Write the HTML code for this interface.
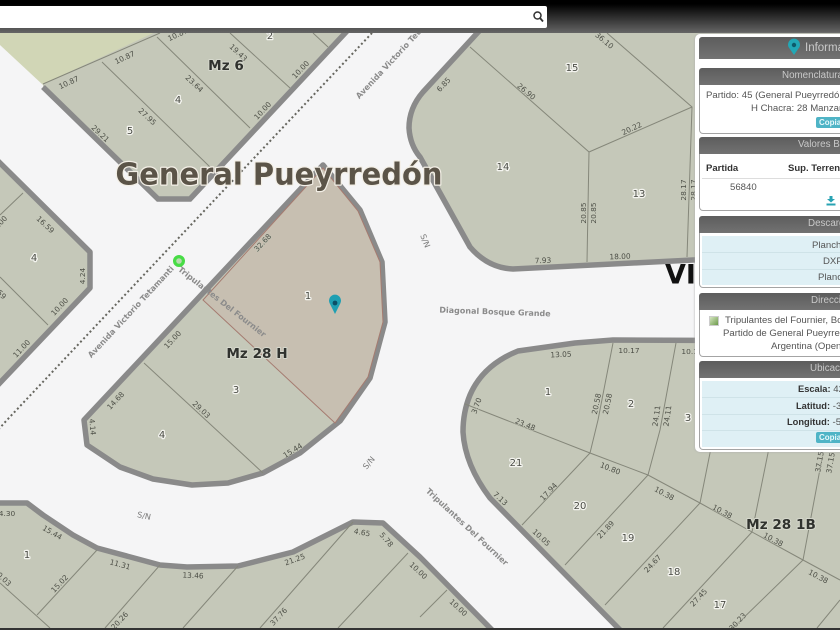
<!DOCTYPE html>
<html><head><meta charset="utf-8">
<style>
html,body{margin:0;padding:0;background:#f5f5f6}
#w{position:relative;width:840px;height:630px;overflow:hidden;font-family:"Liberation Sans",sans-serif}
svg{position:absolute;left:0;top:0;filter:blur(.35px)}
.b{fill:#c5c8b9;stroke:#8a8a8a;stroke-width:5.5;stroke-linejoin:round}
.l{fill:none;stroke:#85877a;stroke-width:1}
text{font-family:"DejaVu Sans","Liberation Sans",sans-serif;text-anchor:middle;dominant-baseline:middle}
.d{font-size:7.4px;fill:#4d4f47;paint-order:stroke;stroke:#c5c8b9;stroke-width:1px}
.n{font-size:10px;fill:#4a4c45;paint-order:stroke;stroke:#f4f4ef;stroke-width:2.5px;stroke-linejoin:round}
.m{font-size:13.6px;font-weight:bold;fill:#30322e;paint-order:stroke;stroke:#d6d8cd;stroke-width:2px;stroke-linejoin:round}
.r{font-size:8px;fill:#8b8b8b;font-weight:bold;paint-order:stroke;stroke:#f5f5f6;stroke-width:1px}
.s{font-size:8px;fill:#7a7a7a}
#top{position:absolute;left:0;top:0;width:840px;height:33px;background:linear-gradient(#000 0,#000 4px,#666 33px)}
#search{position:absolute;left:0;top:6px;width:547px;height:22px;background:#fff;border-radius:0 2px 2px 0}
#panel{position:absolute;left:695px;top:34px;width:160px;height:418px;background:#fff;border-radius:5px;box-shadow:0 0 2px #aaa}
.h{position:absolute;left:704px;width:141px;background:linear-gradient(#5d5d5d,#727272);border-radius:3px 0 0 0;color:#c9c9c9;font-size:9.8px;line-height:16px;height:16px}
.h span{position:absolute;white-space:nowrap;top:0}
.c{position:absolute;left:699px;width:150px;background:#fff;border:1px solid #a4a4a4;border-top:0;border-radius:0 0 4px 4px;box-sizing:border-box}
.t{position:absolute;font-size:9.6px;color:#555;white-space:nowrap;line-height:13px}
.tb{position:absolute;left:702px;width:145px;background:#dff0f5}
.sep{position:absolute;left:702px;width:145px;height:1px;background:#cfe3e8}
.cp{position:absolute;left:816px;width:30px;height:11px;background:#4fb4c6;border-radius:2px;color:#e8f8fb;font-size:8px;font-weight:bold;line-height:11px;padding-left:3px;box-sizing:border-box}
</style></head><body>
<div id="w">
<svg width="840" height="630" viewBox="0 0 840 630">
<rect width="840" height="630" fill="#f5f5f6"/>
<polygon points="0,33 162,33 43,85 0,45" fill="#d1d6b6"/>
<!-- Mz 6 -->
<path class="b" d="M43,87 L158,199 L190,199 L348,30 L160,30 L43,84Z" style="stroke:none"/>
<path fill="none" stroke="#8a8a8a" stroke-width="5.5" d="M43,87 L158,199 L190,199 L348,30"/>
<path class="l" d="M43,84 L160,33M102,62 L210,167M157,37 L250,128M230,33 L290,88M313,33 L328,47"/>
<!-- left block -->
<path class="b" d="M-5,158 L90,252 L90,288 L-5,388Z"/>
<path class="l" d="M0,277 L48,325M23,193 L0,215"/>
<!-- Mz 28H -->
<path class="b" d="M323,165 L360,210 L382,262 L385,322 L370,378 L340,421 L300,453 L263,473 L228,483 L192,485 L153,479 L120,467 L87,445 L84,420Z"/>
<path d="M323,168 L358,211 L380,262 L383,322 L368,377 L335,423 L203,300Z" fill="#c7bfb1" stroke="#a57b70" stroke-width="1"/>
<path class="l" d="M144,363 L263,473"/>
<!-- right top -->
<path class="b" d="M481,29 L423,92 Q409,108 409,128 Q410,145 420,157 L470,247 Q488,268 513,269 L693,260 L860,255 L860,29Z"/>
<path class="l" d="M470,47 L589,152 L587,262M589,152 L692,107M607,33 L692,107 L687,257"/>
<!-- lower right -->
<path class="b" d="M860,341 L613,340 L575,343 L518,351 Q483,365 470,395 Q463,412 463,432 Q465,465 490,498 L625,635 L860,635Z"/>
<path class="l" d="M465,404 L590,453 L648,475 L700,503 L752,532 L803,560 L840,580M590,453 L598,420 L613,343M648,475 L660,430 L676,343M700,503 L710,453 L725,345M752,532 L768,453 L780,345M803,560 L823,453L835,345M590,453 L522,525M648,475 L565,565M700,503 L605,605M752,532 L663,628M803,560 L733,628M840,600 L817,628"/>
<!-- bottom left -->
<path class="b" d="M-5,503 L27,503 L43,515 L73,535 L97,548 L160,565 L187,567 L238,566 L293,552 L353,522 L383,523 L420,557 L497,635 L-5,635Z"/>
<path class="l" d="M97,550 L37,615M0,583 L50,628M160,565 L105,628M238,566 L183,628M353,522 L260,628M408,553 L338,628M447,590 L420,617"/>
<!-- dotted railway -->
<path d="M372,33 L205,210 L7,420 L-2,430" fill="none" stroke="#66665f" stroke-width="2" stroke-dasharray="2 2.6"/>
<!-- road labels -->
<g>
<text class="r" transform="translate(131 312) rotate(-47)">Avenida Victorio Tetamanti</text>
<text class="r" transform="translate(399 53) rotate(-47)">Avenida Victorio Tetamanti</text>
<text class="r" transform="translate(222 302) rotate(38)" style="stroke:none">Tripulantes Del Fournier</text>
<text class="r" transform="translate(467 527) rotate(43)">Tripulantes Del Fournier</text>
<text class="r" transform="translate(495 312) rotate(2)">Diagonal Bosque Grande</text>
</g>
<text class="s" transform="translate(425 241) rotate(68)">S/N</text>
<text class="s" transform="translate(369 463) rotate(-50)">S/N</text>
<text class="s" transform="translate(144 516) rotate(12)">S/N</text>
<!-- dims -->
<text class="d" transform="translate(69 83) rotate(-25)">10.87</text>
<text class="d" transform="translate(125 58) rotate(-25)">10.87</text>
<text class="d" transform="translate(178 35) rotate(-25)">10.87</text>
<text class="d" transform="translate(238 53) rotate(43)">19.43</text>
<text class="d" transform="translate(194 84) rotate(43)">23.64</text>
<text class="d" transform="translate(147 117) rotate(43)">27.95</text>
<text class="d" transform="translate(100 134) rotate(43)">29.21</text>
<text class="d" transform="translate(301 70) rotate(-47)">10.00</text>
<text class="d" transform="translate(263 111) rotate(-47)">10.00</text>
<text class="d" transform="translate(444 85) rotate(-47)">6.85</text>
<text class="d" transform="translate(526 92) rotate(40)">26.90</text>
<text class="d" transform="translate(604 41) rotate(40)">36.10</text>
<text class="d" transform="translate(632 129) rotate(-25)">20.22</text>
<text class="d" transform="translate(684 190) rotate(-90)">28.17</text>
<text class="d" transform="translate(694 190) rotate(-90)">28.17</text>
<text class="d" transform="translate(584 213) rotate(-90)">20.85</text>
<text class="d" transform="translate(594 213) rotate(-90)">20.85</text>
<text class="d" transform="translate(543 261) rotate(-2)">7.93</text>
<text class="d" transform="translate(620 257) rotate(-2)">18.00</text>
<text class="d" transform="translate(45 225) rotate(43)">16.59</text>
<text class="d" transform="translate(83 276) rotate(-90)">4.24</text>
<text class="d" transform="translate(60 307) rotate(-47)">10.00</text>
<text class="d" transform="translate(22 349) rotate(-47)">11.00</text>
<text class="d" transform="translate(-3 291) rotate(43)">16.59</text>
<text class="d" transform="translate(-1 225) rotate(-47)">10.00</text>
<text class="d" transform="translate(263 243) rotate(-47)">32.68</text>
<text class="d" transform="translate(173 340) rotate(-47)">15.00</text>
<text class="d" transform="translate(116 401) rotate(-47)">14.68</text>
<text class="d" transform="translate(201 410) rotate(43)">29.03</text>
<text class="d" transform="translate(293 451) rotate(-32)">15.44</text>
<text class="d" transform="translate(92 427) rotate(85)">4.14</text>
<text class="d" transform="translate(561 355) rotate(-3)">13.05</text>
<text class="d" transform="translate(629 351)">10.17</text>
<text class="d" transform="translate(692 352)">10.17</text>
<text class="d" transform="translate(477 406) rotate(-70)">3.70</text>
<text class="d" transform="translate(597 404) rotate(-78)">20.58</text>
<text class="d" transform="translate(608 404) rotate(-78)">20.58</text>
<text class="d" transform="translate(657 416) rotate(-82)">24.11</text>
<text class="d" transform="translate(668 416) rotate(-82)">24.11</text>
<text class="d" transform="translate(525 425) rotate(22)">23.48</text>
<text class="d" transform="translate(610 469) rotate(22)">10.80</text>
<text class="d" transform="translate(664 494) rotate(28)">10.38</text>
<text class="d" transform="translate(722 512) rotate(28)">10.38</text>
<text class="d" transform="translate(773 540) rotate(28)">10.38</text>
<text class="d" transform="translate(818 577) rotate(28)">10.38</text>
<text class="d" transform="translate(820 462) rotate(-80)">37.15</text>
<text class="d" transform="translate(831 463) rotate(-80)">37.15</text>
<text class="d" transform="translate(500 499) rotate(43)">7.13</text>
<text class="d" transform="translate(549 492) rotate(-47)">17.94</text>
<text class="d" transform="translate(541 538) rotate(43)">10.05</text>
<text class="d" transform="translate(606 530) rotate(-47)">21.89</text>
<text class="d" transform="translate(653 564) rotate(-47)">24.67</text>
<text class="d" transform="translate(699 598) rotate(-47)">27.45</text>
<text class="d" transform="translate(738 622) rotate(-47)">30.23</text>
<text class="d" transform="translate(418 571) rotate(43)">10.00</text>
<text class="d" transform="translate(458 608) rotate(43)">10.00</text>
<text class="d" transform="translate(362 533) rotate(10)">4.65</text>
<text class="d" transform="translate(386 540) rotate(50)">5.78</text>
<text class="d" transform="translate(295 560) rotate(-20)">21.25</text>
<text class="d" transform="translate(279 617) rotate(-47)">37.76</text>
<text class="d" transform="translate(193 576) rotate(3)">13.46</text>
<text class="d" transform="translate(120 565) rotate(15)">11.31</text>
<text class="d" transform="translate(52 533) rotate(30)">15.44</text>
<text class="d" transform="translate(7 514)">4.30</text>
<text class="d" transform="translate(60 584) rotate(-47)">15.02</text>
<text class="d" transform="translate(120 621) rotate(-47)">20.26</text>
<text class="d" transform="translate(2 578) rotate(43)">20.03</text>
<!-- numbers -->
<g>
<text class="n" x="178" y="100">4</text><text class="n" x="130" y="131">5</text><text class="n" x="270" y="36">2</text>
<text class="n" x="572" y="68">15</text><text class="n" x="503" y="167">14</text><text class="n" x="639" y="194">13</text>
<text class="n" x="34" y="258">4</text><text class="n" x="308" y="296">1</text><text class="n" x="236" y="390">3</text><text class="n" x="162" y="435">4</text>
<text class="n" x="548" y="392">1</text><text class="n" x="631" y="404">2</text><text class="n" x="688" y="418">3</text>
<text class="n" x="516" y="463">21</text><text class="n" x="580" y="506">20</text><text class="n" x="628" y="538">19</text><text class="n" x="674" y="572">18</text><text class="n" x="720" y="605">17</text>
<text class="n" x="27" y="555">1</text>
</g>
<text class="m" x="226" y="66">Mz 6</text>
<text class="m" x="257" y="354">Mz 28 H</text>
<text class="m" x="781" y="525">Mz 28 1B</text>
<text x="279" y="176" font-size="30" font-weight="bold" fill="#5b5448" textLength="327" lengthAdjust="spacingAndGlyphs" style="paint-order:stroke;stroke:#f3efe6;stroke-width:2.5px;stroke-linejoin:round">General Pueyrredón</text>
<text x="665" y="276" font-size="27" font-weight="bold" fill="#111" style="text-anchor:start">VI</text>
<!-- markers -->
<circle cx="179" cy="261" r="4.4" fill="#b9d9b0" stroke="#47dc45" stroke-width="3.2"/>
<path d="M335,314 L329.5,303 A6,6 0 1 1 340.5,303Z" fill="#1f9fb2"/><circle cx="335" cy="303" r="2.4" fill="#0c4f66"/>
</svg>
<div id="top"></div>
<div id="search"></div>
<svg width="840" height="630" style="pointer-events:none;z-index:2"><circle cx="537.5" cy="15.5" r="3.5" fill="none" stroke="#333" stroke-width="1.5"/><path d="M540,18 L543,21.5" stroke="#333" stroke-width="1.8"/></svg>
<div style="position:absolute;left:0;top:628px;width:840px;height:2px;background:#333"></div>
<div id="panel"></div>

<div class="h" style="left:699px;top:37px;height:22px;font-size:11.5px;line-height:22px"><span style="left:106px">Información</span></div>
<svg width="840" height="630" style="z-index:3"><path d="M794,55 L788.5,47 A6,6 0 1 1 799.5,47Z" fill="#22a7b5"/><circle cx="794" cy="45" r="2.2" fill="#0d5a6a"/></svg>

<div class="h" style="left:699px;top:68px;height:17px"><span style="left:83px">Nomenclatura</span></div>
<div class="c" style="top:85px;height:49px"></div>
<div class="t" style="left:706px;top:89px">Partido: 45 (General Pueyrredón)</div>
<div class="t" style="left:751px;top:102px">H Chacra: 28 Manzana</div>
<div class="cp" style="top:117px">Copiar</div>

<div class="h" style="left:699px;top:137px;height:17px"><span style="left:99px">Valores Básicos</span></div>
<div class="c" style="top:154px;height:57px"></div>
<div class="t" style="left:706px;top:162px;font-weight:bold;color:#333;font-size:9.5px">Partida</div>
<div class="t" style="left:788px;top:162px;font-weight:bold;color:#333;font-size:9.5px">Sup. Terreno</div>
<div style="position:absolute;left:702px;top:178px;width:145px;height:1px;background:#ddd"></div>
<div class="t" style="left:730px;top:181px">56840</div>
<svg width="840" height="630" style="z-index:3"><path d="M829.5,196 h3 v3 h2.5 l-4,3.5 l-4,-3.5 h2.5z M826.5,203.5 h9 v2 h-9z" fill="#29a3b3"/></svg>

<div class="h" style="left:699px;top:216px;height:17px"><span style="left:109px">Descargas</span></div>
<div class="c" style="top:233px;height:55px"></div>
<div class="tb" style="top:236px;height:49px"></div>
<div class="sep" style="top:252px"></div><div class="sep" style="top:269px"></div>
<div class="t" style="left:812px;top:239px">Planchetas</div>
<div class="t" style="left:823px;top:255px">DXF</div>
<div class="t" style="left:818px;top:271px">Plano</div>

<div class="h" style="left:699px;top:293px;height:17px"><span style="left:112px">Dirección</span></div>
<div class="c" style="top:310px;height:47px"></div>
<div style="position:absolute;left:709px;top:316px;width:10px;height:10px;background:linear-gradient(135deg,#d5e6c0,#6c9a4a);border:1px solid #ccc;box-sizing:border-box"></div>
<div class="t" style="left:725px;top:314px">Tripulantes del Fournier, Bosque</div>
<div class="t" style="left:723px;top:327px">Partido de General Pueyrredón</div>
<div class="t" style="left:771px;top:340px">Argentina (OpenStreet)</div>

<div class="h" style="left:699px;top:361px;height:17px"><span style="left:111px">Ubicación</span></div>
<div class="c" style="top:378px;height:72px"></div>
<div class="tb" style="top:381px;height:66px"></div>
<div class="sep" style="top:397px"></div><div class="sep" style="top:414px"></div><div class="sep" style="top:430px"></div>
<div class="t" style="left:798px;top:383px"><b style="color:#333;font-size:9.3px">Escala:</b> 4231</div>
<div class="t" style="left:796px;top:400px"><b style="color:#333;font-size:9.3px">Latitud:</b> -38.0</div>
<div class="t" style="left:787px;top:416px"><b style="color:#333;font-size:9.3px">Longitud:</b> -57.5</div>
<div class="cp" style="top:432px">Copiar</div>
</div>
</body></html>
